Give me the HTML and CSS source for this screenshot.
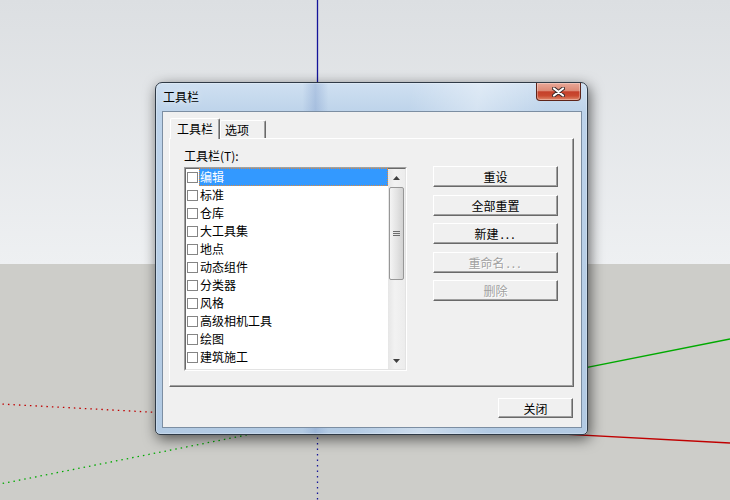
FILE: index.html
```html
<!DOCTYPE html>
<html lang="zh-CN">
<head>
    <meta charset="UTF-8">
    <title>工具栏</title>
    <link rel="stylesheet" href="styles.css">
</head>
<body>
    <div class="scene">
        <div class="sky"></div>
        <div class="ground"></div>

        <!-- model axes behind the dialog -->
        <svg class="axes" width="730" height="500" viewBox="0 0 730 500">
            <line x1="317.5" y1="421" x2="317.5" y2="0" stroke="#14149a" stroke-width="1.3"/>
            <line x1="317.5" y1="421" x2="317.5" y2="500" stroke="#14149a" stroke-width="1.3" stroke-dasharray="1.5 4"/>
            <line x1="317" y1="421" x2="730" y2="339" stroke="#00aa00" stroke-width="1.3"/>
            <line x1="317" y1="421" x2="0" y2="484" stroke="#00aa00" stroke-width="1.3" stroke-dasharray="1.5 4"/>
            <line x1="317" y1="421" x2="730" y2="443" stroke="#c00000" stroke-width="1.3"/>
            <line x1="317" y1="421" x2="0" y2="404" stroke="#c00000" stroke-width="1.3" stroke-dasharray="1.5 4"/>
        </svg>

        <div class="dialog">
            <div class="titlebar">
                <span class="title">工具栏</span>
                <button class="close-x" title="关闭">
                    <svg width="13" height="10" viewBox="0 0 13 10">
                        <path d="M2 1.5 L11 8.5 M11 1.5 L2 8.5" stroke="#3a2a2a" stroke-width="4" stroke-linecap="round"/>
                        <path d="M2 1.5 L11 8.5 M11 1.5 L2 8.5" stroke="#ffffff" stroke-width="2.2" stroke-linecap="round"/>
                    </svg>
                </button>
            </div>

            <div class="client">
                <div class="tabs">
                    <div class="tab active">工具栏</div>
                    <div class="tab">选项</div>
                </div>

                <div class="tab-panel">
                    <div class="list-col">
                        <div class="list-label">工具栏(T):</div>
                        <div class="listbox">
                            <div class="listbox-inner">
                                <div class="list-items">
                                    <div class="item selected"><span class="check"></span><span class="item-text">编辑</span></div>
                                    <div class="item"><span class="check"></span><span class="item-text">标准</span></div>
                                    <div class="item"><span class="check"></span><span class="item-text">仓库</span></div>
                                    <div class="item"><span class="check"></span><span class="item-text">大工具集</span></div>
                                    <div class="item"><span class="check"></span><span class="item-text">地点</span></div>
                                    <div class="item"><span class="check"></span><span class="item-text">动态组件</span></div>
                                    <div class="item"><span class="check"></span><span class="item-text">分类器</span></div>
                                    <div class="item"><span class="check"></span><span class="item-text">风格</span></div>
                                    <div class="item"><span class="check"></span><span class="item-text">高级相机工具</span></div>
                                    <div class="item"><span class="check"></span><span class="item-text">绘图</span></div>
                                    <div class="item"><span class="check"></span><span class="item-text">建筑施工</span></div>
                                    <div class="item"><span class="check"></span><span class="item-text">截面</span></div>
                                </div>
                                <div class="scrollbar">
                                    <div class="sb-arrow">
                                        <svg width="7" height="4" viewBox="0 0 7 4"><path d="M3.5 0 L7 4 L0 4 Z" fill="#404040"/></svg>
                                    </div>
                                    <div class="sb-track">
                                        <div class="sb-thumb">
                                            <svg width="7" height="6" viewBox="0 0 7 6">
                                                <path d="M0 0.5 H7 M0 2.5 H7 M0 4.5 H7" stroke="#6d6d6d" stroke-width="1"/>
                                            </svg>
                                        </div>
                                    </div>
                                    <div class="sb-arrow">
                                        <svg width="7" height="4" viewBox="0 0 7 4"><path d="M0 0 L7 0 L3.5 4 Z" fill="#404040"/></svg>
                                    </div>
                                </div>
                            </div>
                        </div>
                    </div>

                    <div class="btn-col">
                        <button class="btn">重设</button>
                        <button class="btn">全部重置</button>
                        <button class="btn">新建<span class="dots">...</span></button>
                        <button class="btn" disabled>重命名<span class="dots">...</span></button>
                        <button class="btn" disabled>删除</button>
                    </div>
                </div>

                <div class="footer">
                    <button class="btn btn-close">关闭</button>
                </div>
            </div>
        </div>
    </div>
</body>
</html>
```

FILE: styles.css
```css
* {
    box-sizing: border-box;
}

body {
    margin: 0;
    width: 730px;
    height: 500px;
    overflow: hidden;
    font-family: "Noto Sans CJK SC", "Liberation Sans", sans-serif;
    font-size: 12px;
    color: #000;
}

.scene {
    position: relative;
    width: 730px;
    height: 500px;
    display: flex;
    flex-direction: column;
}

.sky {
    height: 264px;
    background: linear-gradient(#dcdfe2, #eef0f2);
}

.ground {
    flex: 1;
    background: #cdcdc9;
}

.axes {
    position: absolute;
    left: 0;
    top: 0;
}

/* window */

.dialog {
    position: absolute;
    left: 155px;
    top: 82px;
    width: 433px;
    height: 353px;
    display: flex;
    flex-direction: column;
    padding: 0 5px 6px 6px;
    border: 1px solid #2f3a46;
    border-radius: 7px 7px 5px 5px;
    background:
        linear-gradient(100deg, rgba(255,255,255,0) 52%, rgba(255,255,255,0.35) 66%, rgba(255,255,255,0) 80%),
        linear-gradient(90deg, rgba(120,150,200,0) 34%, rgba(120,150,200,0.35) 37%, rgba(120,150,200,0) 40%),
        linear-gradient(#cfe0f1 0, #bdd3ea 30px, #b2cae3 100%);
    box-shadow: 0 0 0 1px rgba(255,255,255,0.25) inset, 2px 4px 14px rgba(0,0,0,0.6);
}

.titlebar {
    height: 28px;
    display: flex;
    align-items: center;
    justify-content: space-between;
}

.title {
    padding-left: 1px;
    line-height: 14px;
    text-shadow: 0 0 6px rgba(255,255,255,0.9);
}

.close-x {
    align-self: flex-start;
    width: 45px;
    height: 18px;
    margin-right: 1px;
    padding: 0;
    display: flex;
    align-items: center;
    justify-content: center;
    border: 1px solid #5e2419;
    border-top: none;
    border-radius: 0 0 4px 4px;
    background: linear-gradient(#e9a898 0%, #dc8a76 45%, #c5402a 52%, #c94a30 75%, #e0896c 100%);
    box-shadow: inset 0 0 0 1px rgba(255,255,255,0.3);
}

.client {
    height: 317px;
    display: flex;
    flex-direction: column;
    padding: 6px 7px 9px 6px;
    border: 1px solid #7c8ea2;
    background: #f0f0f0;
}

/* tabs */

.tabs {
    height: 20px;
    display: flex;
    align-items: flex-end;
    padding-left: 1px;
}

.tab {
    height: 18px;
    width: 46px;
    padding-left: 4px;
    line-height: 17px;
    border: 1px solid;
    border-color: #fff #696969 transparent #fff;
    border-bottom: none;
    border-radius: 2px 2px 0 0;
    box-shadow: inset -1px 0 #a0a0a0;
    background: #f0f0f0;
}

.tab.active {
    position: relative;
    z-index: 1;
    height: 21px;
    width: 50px;
    margin-bottom: -1px;
    padding-left: 6px;
    line-height: 19px;
}

.tab-panel {
    height: 249px;
    display: flex;
    padding: 10px 0 0 14px;
    border: 1px solid;
    border-color: #fff #696969 #696969 #fff;
    box-shadow: inset -1px -1px #a0a0a0;
}

.list-col {
    width: 223px;
}

.list-label {
    line-height: 14px;
    margin-bottom: 4px;
}

.listbox {
    height: 204px;
    border: 1px solid;
    border-color: #a0a0a0 #fff #fff #a0a0a0;
}

.listbox-inner {
    height: 100%;
    display: flex;
    border: 1px solid;
    border-color: #696969 #e3e3e3 #e3e3e3 #696969;
    background: #fff;
}

.list-items {
    flex: 1;
    overflow: hidden;
    margin-top: -1px;
}

.item {
    height: 18px;
    display: flex;
    align-items: center;
}

.check {
    width: 11px;
    height: 11px;
    margin-left: 1px;
    border: 1px solid #858585;
    background: #fff;
}

.item-text {
    flex: 1;
    height: 18px;
    padding-left: 1px;
    line-height: 18px;
    margin-left: 1px;
}

.item.selected .item-text {
    background: #3399ff;
    color: #fff;
    outline: 1px dotted #e08a3c;
    outline-offset: -1px;
}

/* scrollbar */

.scrollbar {
    width: 17px;
    display: flex;
    flex-direction: column;
    background: linear-gradient(90deg, #e6e6e6, #f2f2f2 40%, #ececec);
}

.sb-arrow {
    height: 17px;
    display: flex;
    align-items: center;
    justify-content: center;
}

.sb-track {
    flex: 1;
    padding-top: 1px;
}

.sb-thumb {
    height: 93px;
    margin: 0 1px;
    display: flex;
    align-items: center;
    justify-content: center;
    border: 1px solid #979797;
    border-radius: 2px;
    background: linear-gradient(90deg, #f4f4f4, #e4e4e4 50%, #d2d2d2);
}

/* buttons */

.btn-col {
    display: flex;
    flex-direction: column;
    gap: 7.5px;
    margin: 17px 0 0 26px;
}

.btn {
    width: 125px;
    height: 21px;
    padding: 0;
    font-family: inherit;
    font-size: 12px;
    line-height: 17px;
    color: #000;
    background: #f0f0f0;
    border: 1px solid;
    border-color: #fff #696969 #696969 #fff;
    box-shadow: inset -1px -1px #a0a0a0;
}

.btn:disabled {
    color: #a0a0a0;
    text-shadow: 1px 1px 0 #fff;
}

.dots {
    letter-spacing: 2px;
    margin-left: 2px;
}

.footer {
    margin-top: 11px;
    display: flex;
    justify-content: flex-end;
}

.btn-close {
    width: 75px;
    height: 20px;
    margin-right: 1px;
}
```
